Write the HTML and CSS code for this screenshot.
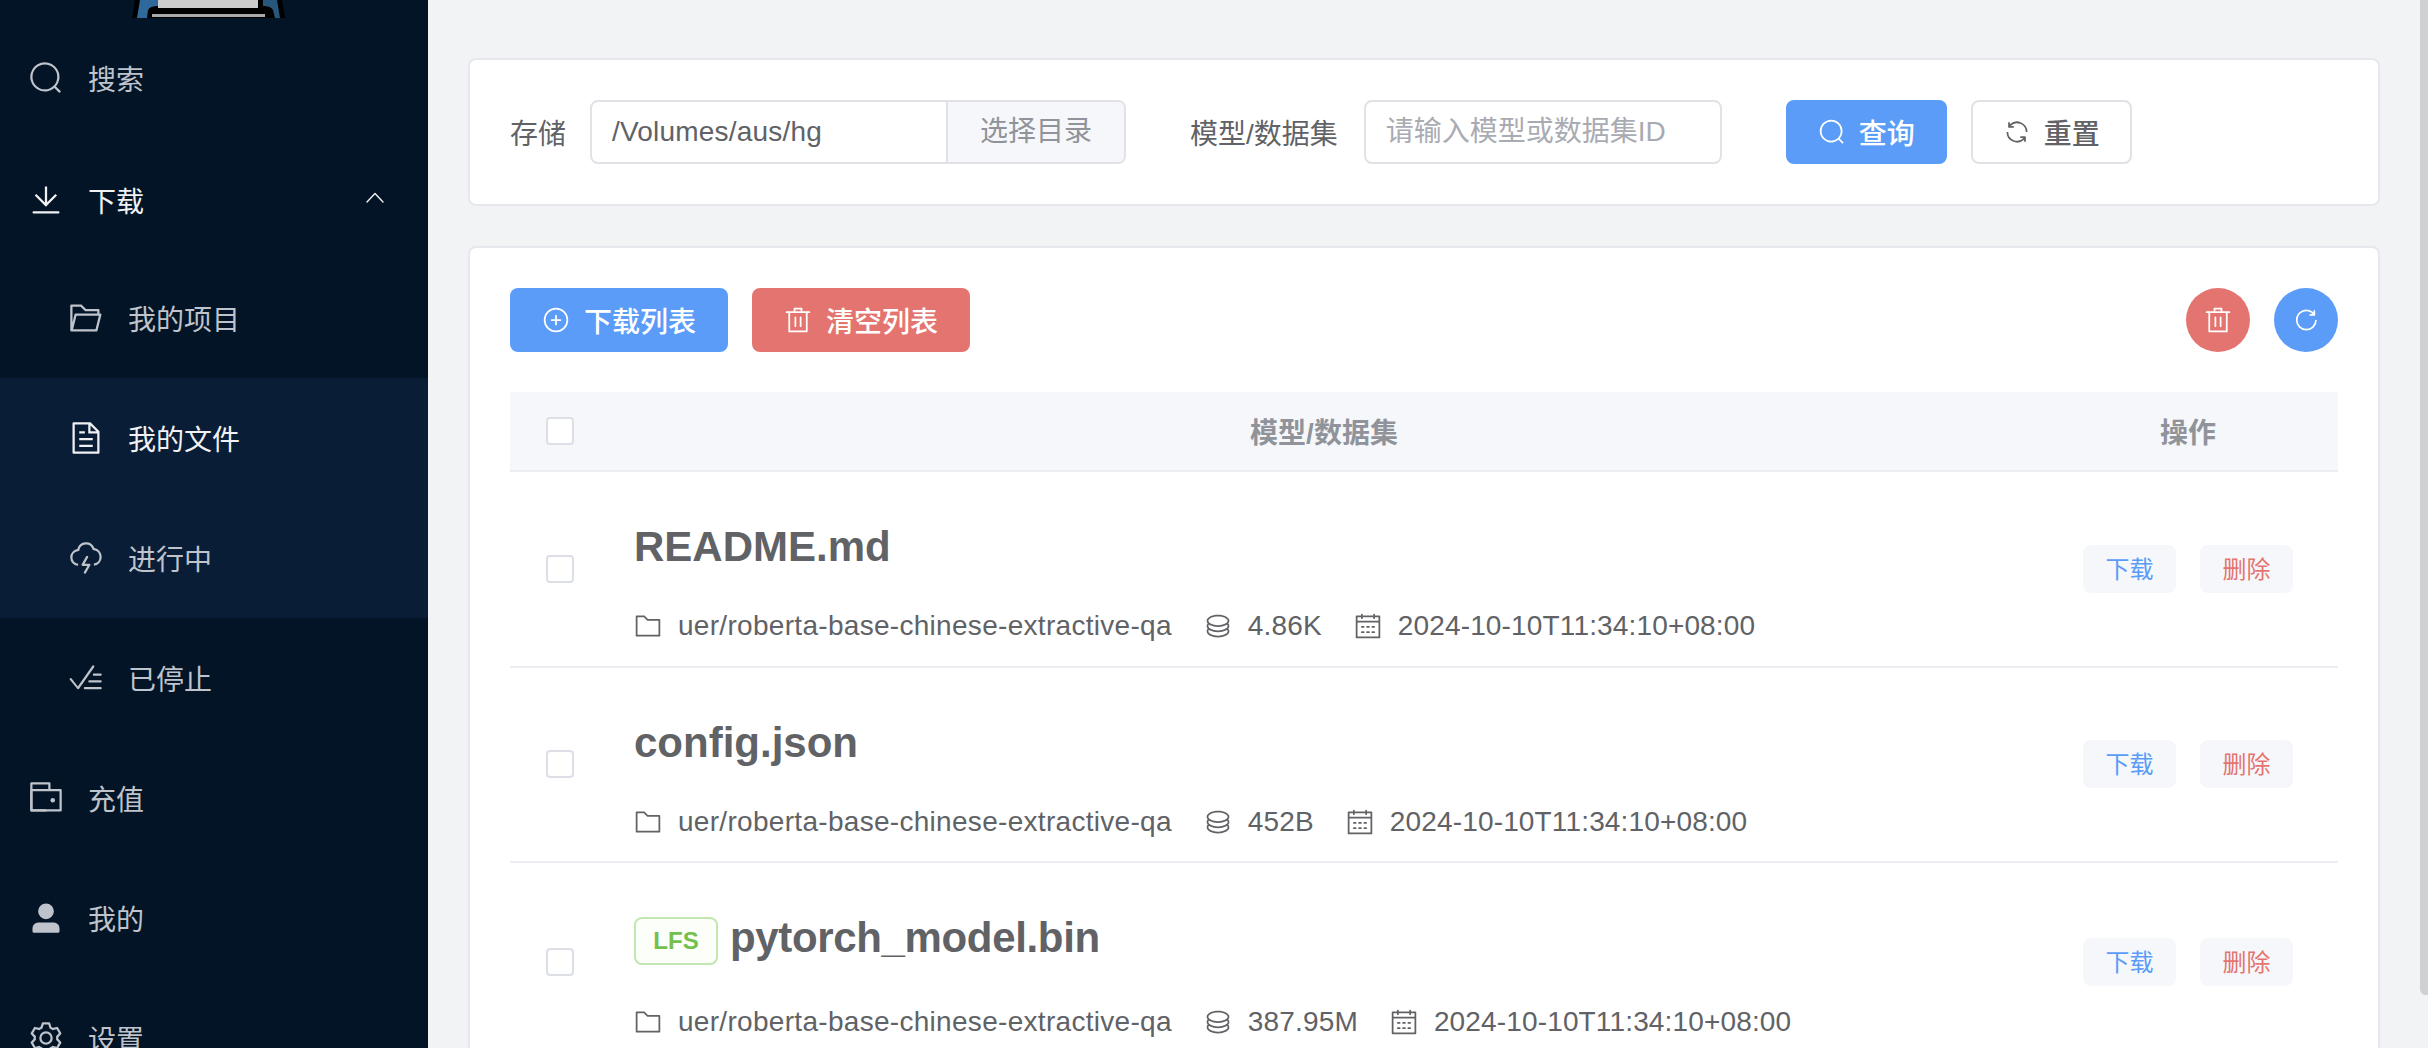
FILE: index.html
```html
<!DOCTYPE html>
<html lang="zh-CN">
<head>
    <meta charset="UTF-8">
    <meta name="viewport" content="width=device-width, initial-scale=1.0">
    <title>我的文件</title>
    <link rel="stylesheet" href="styles.css">
</head>
<body>
    <svg class="icon-defs" xmlns="http://www.w3.org/2000/svg">
        <symbol id="i-search" viewBox="0 0 1024 1024"><path d="m795.904 750.72 124.992 124.928a32 32 0 0 1-45.248 45.248L750.656 795.904a416 416 0 1 1 45.248-45.248zM480 832a352 352 0 1 0 0-704 352 352 0 0 0 0 704z"/></symbol>
        <symbol id="i-download" viewBox="0 0 1024 1024"><path d="M160 832h704a32 32 0 1 1 0 64H160a32 32 0 1 1 0-64zm384-253.696 236.288-236.352 45.248 45.248L508.8 704 192 387.2l45.248-45.248L480 584.704V128h64v450.304z"/></symbol>
        <symbol id="i-arrow-up" viewBox="0 0 1024 1024"><path d="m488.832 344.32-339.84 356.672a32 32 0 0 0 0 44.16l.384.384a29.44 29.44 0 0 0 42.688 0l320-335.872 319.872 335.872a29.44 29.44 0 0 0 42.688 0l.384-.384a32 32 0 0 0 0-44.16L535.168 344.32a32 32 0 0 0-46.336 0z"/></symbol>
        <symbol id="i-folder-opened" viewBox="0 0 1024 1024"><path d="M878.08 448H241.92l-96 384h636.16l96-384zM832 384v-64H485.76L357.504 192H128v448l57.92-231.744A32 32 0 0 1 216.96 384H832zm-24.96 512H96a32 32 0 0 1-32-32V160a32 32 0 0 1 32-32h287.872l128.384 128H864a32 32 0 0 1 32 32v96h23.04a32 32 0 0 1 31.04 39.744l-112 448A32 32 0 0 1 807.04 896z"/></symbol>
        <symbol id="i-document" viewBox="0 0 1024 1024"><path d="M832 384H576V128H192v768h640V384zm-26.496-64L640 154.496V320h165.504zM160 64h480l256 256v608a32 32 0 0 1-32 32H160a32 32 0 0 1-32-32V96a32 32 0 0 1 32-32zm160 448h384v64H320v-64zm0-192h160v64H320v-64zm0 384h384v64H320v-64z"/></symbol>
        <symbol id="i-lightning" viewBox="0 0 1024 1024"><path d="M288 671.36v64.128A239.808 239.808 0 0 1 63.744 496.192a240.32 240.32 0 0 1 199.488-236.8 256.128 256.128 0 0 1 487.872-30.976A256.064 256.064 0 0 1 736 734.016v-64.768a192 192 0 0 0 3.328-377.92l-35.2-6.592-12.8-33.408a192.064 192.064 0 0 0-365.952 23.232l-9.92 40.896-41.472 7.04a176.32 176.32 0 0 0-146.24 173.568c0 91.968 70.464 167.36 160.256 175.232z"/><path d="M416 736a32 32 0 0 1-27.776-47.872l128-224a32 32 0 1 1 55.552 31.744L471.168 672H608a32 32 0 0 1 27.776 47.872l-128 224a32 32 0 1 1-55.68-31.744L552.96 736H416z"/></symbol>
        <symbol id="i-finished" viewBox="0 0 1024 1024"><path d="M280.768 753.728 691.456 167.04a32 32 0 1 1 52.416 36.672L314.24 817.472a32 32 0 0 1-45.44 7.296 32 32 0 0 1-6.08-5.76L53.376 563.712a32 32 0 1 1 49.728-40.32l177.664 230.336zM736 448a32 32 0 1 1 0-64h192a32 32 0 1 1 0 64H736zM608 640a32 32 0 0 1 0-64h319.936a32 32 0 1 1 0 64H608zM480 832a32 32 0 1 1 0-64h447.936a32 32 0 1 1 0 64H480z"/></symbol>
        <symbol id="i-wallet" viewBox="0 0 1024 1024"><path d="M640 288h-64V128H128v704h384v32a32 32 0 0 0 32 32H96a32 32 0 0 1-32-32V96a32 32 0 0 1 32-32h512a32 32 0 0 1 32 32v192z"/><path d="M128 320v512h768V320H128zm-32-64h832a32 32 0 0 1 32 32v576a32 32 0 0 1-32 32H96a32 32 0 0 1-32-32V288a32 32 0 0 1 32-32z"/><path d="M704 640a64 64 0 1 1 0-128 64 64 0 0 1 0 128z"/></symbol>
        <symbol id="i-user" viewBox="0 0 1024 1024"><path d="M288 320a224 224 0 1 0 448 0 224 224 0 1 0-448 0zm544 608H160a32 32 0 0 1-32-32v-96a160 160 0 0 1 160-160h448a160 160 0 0 1 160 160v96a32 32 0 0 1-32 32z"/></symbol>
        <symbol id="i-setting" viewBox="0 0 1024 1024"><path d="M600.704 64a32 32 0 0 1 30.464 22.208l35.2 109.376c14.784 7.232 28.928 15.36 42.432 24.512l112.384-24.192a32 32 0 0 1 34.432 15.36L944.32 364.8a32 32 0 0 1-4.032 37.504l-77.12 85.12a357.12 357.12 0 0 1 0 49.024l77.12 85.248a32 32 0 0 1 4.032 37.504l-88.704 153.6a32 32 0 0 1-34.432 15.296L708.8 803.904c-13.44 9.088-27.648 17.28-42.368 24.512l-35.264 109.376A32 32 0 0 1 600.704 960H423.296a32 32 0 0 1-30.464-22.208L357.696 828.48a351.616 351.616 0 0 1-42.56-24.64l-112.32 24.256a32 32 0 0 1-34.432-15.36L79.68 659.2a32 32 0 0 1 4.032-37.504l77.12-85.248a357.12 357.12 0 0 1 0-48.896l-77.12-85.248A32 32 0 0 1 79.68 364.8l88.704-153.6a32 32 0 0 1 34.432-15.296l112.32 24.256c13.568-9.152 27.776-17.408 42.56-24.64l35.2-109.312A32 32 0 0 1 423.232 64H600.64zm-23.424 64H446.72l-36.352 113.088-24.512 11.968a294.113 294.113 0 0 0-34.816 20.096l-22.656 15.36-116.224-25.088-65.28 113.152 79.68 88.192-1.92 27.136a293.12 293.12 0 0 0 0 40.192l1.92 27.136-79.808 88.192 65.344 113.152 116.224-25.024 22.656 15.296a294.113 294.113 0 0 0 34.816 20.096l24.512 11.968L446.72 896h130.688l36.48-113.152 24.448-11.904a288.282 288.282 0 0 0 34.752-20.096l22.592-15.296 116.288 25.024 65.28-113.152-79.744-88.192 1.92-27.136a293.12 293.12 0 0 0 0-40.256l-1.92-27.136 79.808-88.128-65.344-113.152-116.288 24.96-22.592-15.232a287.616 287.616 0 0 0-34.752-20.096l-24.448-11.904L577.344 128zM512 320a192 192 0 1 1 0 384 192 192 0 0 1 0-384zm0 64a128 128 0 1 0 0 256 128 128 0 0 0 0-256z"/></symbol>
        <symbol id="i-circle-plus" viewBox="0 0 1024 1024"><path d="M352 480h320a32 32 0 1 1 0 64H352a32 32 0 0 1 0-64z"/><path d="M480 672V352a32 32 0 1 1 64 0v320a32 32 0 0 1-64 0z"/><path d="M512 896a384 384 0 1 0 0-768 384 384 0 0 0 0 768zm0 64a448 448 0 1 1 0-896 448 448 0 0 1 0 896z"/></symbol>
        <symbol id="i-delete" viewBox="0 0 1024 1024"><path d="M160 256H96a32 32 0 0 1 0-64h256V95.936a32 32 0 0 1 32-32h256a32 32 0 0 1 32 32V192h256a32 32 0 1 1 0 64h-64v672a32 32 0 0 1-32 32H192a32 32 0 0 1-32-32V256zm448-64v-64H416v64h192zM224 896h576V256H224v640zm192-128a32 32 0 0 1-32-32V416a32 32 0 0 1 64 0v320a32 32 0 0 1-32 32zm192 0a32 32 0 0 1-32-32V416a32 32 0 0 1 64 0v320a32 32 0 0 1-32 32z"/></symbol>
        <symbol id="i-refresh" viewBox="0 0 1024 1024"><path d="M771.776 794.88A384 384 0 0 1 128 512h64a320 320 0 0 0 555.712 216.448H654.72a32 32 0 1 1 0-64h149.056a32 32 0 0 1 32 32v148.928a32 32 0 1 1-64 0v-50.56zM276.288 295.616h92.992a32 32 0 0 1 0 64H220.16a32 32 0 0 1-32-32V178.56a32 32 0 0 1 64 0v50.56A384 384 0 0 1 896.128 512h-64a320 320 0 0 0-555.776-216.384z"/></symbol>
        <symbol id="i-refresh-right" viewBox="0 0 1024 1024"><path d="M784.512 230.272v-50.56a32 32 0 1 1 64 0v149.056a32 32 0 0 1-32 32H667.52a32 32 0 1 1 0-64h92.992A320 320 0 1 0 524.8 833.152a320 320 0 0 0 320-320h64a384 384 0 0 1-384 384 384 384 0 0 1-384-384 384 384 0 0 1 643.712-282.88z"/></symbol>
        <symbol id="i-folder" viewBox="0 0 1024 1024"><path d="M128 192v640h768V320H485.76L357.504 192H128zm-32-64h287.872l128.384 128H928a32 32 0 0 1 32 32v576a32 32 0 0 1-32 32H96a32 32 0 0 1-32-32V160a32 32 0 0 1 32-32z"/></symbol>
        <symbol id="i-coin" viewBox="0 0 1024 1024"><path d="m161.92 580.736 29.888 58.88C171.328 659.776 160 681.728 160 704c0 82.304 155.328 160 352 160s352-77.696 352-160c0-22.272-11.392-44.16-31.808-64.32l30.464-58.432C903.936 615.808 928 657.664 928 704c0 129.728-188.544 224-416 224S96 833.728 96 704c0-46.592 24.32-88.576 65.92-123.264z"/><path d="m161.92 388.736 29.888 58.88C171.328 467.84 160 489.792 160 512c0 82.304 155.328 160 352 160s352-77.696 352-160c0-22.272-11.392-44.16-31.808-64.32l30.464-58.432C903.936 423.808 928 465.664 928 512c0 129.728-188.544 224-416 224S96 641.728 96 512c0-46.592 24.32-88.576 65.92-123.264z"/><path d="M512 544c-227.456 0-416-94.272-416-224S284.544 96 512 96s416 94.272 416 224-188.544 224-416 224zm0-64c196.672 0 352-77.696 352-160S708.672 160 512 160s-352 77.696-352 160 155.328 160 352 160z"/></symbol>
        <symbol id="i-calendar" viewBox="0 0 1024 1024"><path d="M128 384v512h768V192H768v32a32 32 0 1 1-64 0v-32H320v32a32 32 0 0 1-64 0v-32H128v128h768v64H128zm192-256h384V96a32 32 0 1 1 64 0v32h160a32 32 0 0 1 32 32v768a32 32 0 0 1-32 32H96a32 32 0 0 1-32-32V160a32 32 0 0 1 32-32h160V96a32 32 0 0 1 64 0v32zm-32 384h64a32 32 0 0 1 0 64h-64a32 32 0 0 1 0-64zm0 192h64a32 32 0 1 1 0 64h-64a32 32 0 1 1 0-64zm192-192h64a32 32 0 0 1 0 64h-64a32 32 0 0 1 0-64zm0 192h64a32 32 0 1 1 0 64h-64a32 32 0 1 1 0-64zm192-192h64a32 32 0 1 1 0 64h-64a32 32 0 1 1 0-64zm0 192h64a32 32 0 1 1 0 64h-64a32 32 0 1 1 0-64z"/></symbol>
    </svg>

    <div class="layout">
        <aside class="sidebar">
            <div class="logo">
                <svg viewBox="0 0 153 18" width="153" height="18">
                    <path fill="#000" d="M0 18 3 0H150L153 18Z"/>
                    <path fill="#2f699b" d="M5 18 8 0H26V6Q18 6 16 10L15 18Z"/>
                    <path fill="#27587b" d="M148 18 145 0H131V6Q139 6 141 10L143 18Z"/>
                    <rect fill="#cdcdcd" x="26" y="0" width="100" height="8"/>
                    <rect fill="#a9a9a9" x="20" y="14" width="113" height="3"/>
                </svg>
            </div>
            <nav class="menu">
                <a class="menu-item"><svg class="icon"><use href="#i-search"/></svg>搜索</a>
                <a class="menu-item open"><svg class="icon"><use href="#i-download"/></svg>下载<svg class="chevron"><use href="#i-arrow-up"/></svg></a>
                <a class="menu-item sub"><svg class="icon"><use href="#i-folder-opened"/></svg>我的项目</a>
                <a class="menu-item sub current active"><svg class="icon"><use href="#i-document"/></svg>我的文件</a>
                <a class="menu-item sub current"><svg class="icon"><use href="#i-lightning"/></svg>进行中</a>
                <a class="menu-item sub"><svg class="icon"><use href="#i-finished"/></svg>已停止</a>
                <a class="menu-item"><svg class="icon"><use href="#i-wallet"/></svg>充值</a>
                <a class="menu-item"><svg class="icon"><use href="#i-user"/></svg>我的</a>
                <a class="menu-item"><svg class="icon"><use href="#i-setting"/></svg>设置</a>
            </nav>
        </aside>

        <main class="main">
            <section class="card search-card">
                <label class="form-label">存储</label>
                <div class="input-group">
                    <span class="input-value">/Volumes/aus/hg</span>
                    <span class="input-append">选择目录</span>
                </div>
                <label class="form-label second">模型/数据集</label>
                <div class="input-box">请输入模型或数据集ID</div>
                <button class="btn primary query"><svg class="icon"><use href="#i-search"/></svg>查询</button>
                <button class="btn plain"><svg class="icon"><use href="#i-refresh"/></svg>重置</button>
            </section>

            <section class="card list-card">
                <div class="toolbar">
                    <button class="btn primary wide"><svg class="icon"><use href="#i-circle-plus"/></svg>下载列表</button>
                    <button class="btn danger wide"><svg class="icon"><use href="#i-delete"/></svg>清空列表</button>
                    <div class="toolbar-right">
                        <button class="btn-circle danger"><svg class="icon"><use href="#i-delete"/></svg></button>
                        <button class="btn-circle primary"><svg class="icon"><use href="#i-refresh-right"/></svg></button>
                    </div>
                </div>

                <div class="table">
                    <div class="row head">
                        <div class="cell-check"><span class="checkbox"></span></div>
                        <div class="cell-name">模型/数据集</div>
                        <div class="cell-ops">操作</div>
                    </div>

                    <div class="row">
                        <div class="cell-check"><span class="checkbox"></span></div>
                        <div class="cell-name">
                            <div class="file-title">README.md</div>
                            <div class="meta">
                                <span class="meta-item"><svg class="icon"><use href="#i-folder"/></svg>uer/roberta-base-chinese-extractive-qa</span>
                                <span class="meta-item"><svg class="icon"><use href="#i-coin"/></svg>4.86K</span>
                                <span class="meta-item"><svg class="icon"><use href="#i-calendar"/></svg>2024-10-10T11:34:10+08:00</span>
                            </div>
                        </div>
                        <div class="cell-ops">
                            <button class="btn-small blue">下载</button>
                            <button class="btn-small red">删除</button>
                        </div>
                    </div>

                    <div class="row">
                        <div class="cell-check"><span class="checkbox"></span></div>
                        <div class="cell-name">
                            <div class="file-title">config.json</div>
                            <div class="meta">
                                <span class="meta-item"><svg class="icon"><use href="#i-folder"/></svg>uer/roberta-base-chinese-extractive-qa</span>
                                <span class="meta-item"><svg class="icon"><use href="#i-coin"/></svg>452B</span>
                                <span class="meta-item"><svg class="icon"><use href="#i-calendar"/></svg>2024-10-10T11:34:10+08:00</span>
                            </div>
                        </div>
                        <div class="cell-ops">
                            <button class="btn-small blue">下载</button>
                            <button class="btn-small red">删除</button>
                        </div>
                    </div>

                    <div class="row">
                        <div class="cell-check"><span class="checkbox"></span></div>
                        <div class="cell-name">
                            <div class="file-title lfs"><span class="tag">LFS</span>pytorch_model.bin</div>
                            <div class="meta">
                                <span class="meta-item"><svg class="icon"><use href="#i-folder"/></svg>uer/roberta-base-chinese-extractive-qa</span>
                                <span class="meta-item"><svg class="icon"><use href="#i-coin"/></svg>387.95M</span>
                                <span class="meta-item"><svg class="icon"><use href="#i-calendar"/></svg>2024-10-10T11:34:10+08:00</span>
                            </div>
                        </div>
                        <div class="cell-ops">
                            <button class="btn-small blue">下载</button>
                            <button class="btn-small red">删除</button>
                        </div>
                    </div>
                </div>
            </section>
        </main>
        <div class="scrollbar"></div>
    </div>
</body>
</html>
```

FILE: styles.css
```css
:root {
    --blue: #5a9cf8;
    --red: #e4746f;
    --text: #606266;
    --muted: #909399;
    --border: #e0e2e8;
    --line: #ebedf3;
    --head-bg: #f5f7fa;
}
* {
    box-sizing: border-box;
}
body {
    margin: 0;
    height: 1048px;
    overflow: hidden;
    background: #f2f3f5;
    color: var(--text);
    font-family: "Liberation Sans", "Noto Sans CJK SC", sans-serif;
    font-size: 28px;
}
button {
    font-family: inherit;
}
.icon-defs {
    display: none;
}
.icon {
    width: 28px;
    height: 28px;
    fill: currentColor;
    flex: none;
}
.layout {
    position: relative;
    display: flex;
    height: 100%;
}

/* sidebar */
.sidebar {
    width: 428px;
    flex: none;
    background: #021425;
    overflow: hidden;
}
.logo {
    height: 18px;
    padding-left: 132px;
}
.logo svg {
    display: block;
}
.menu-item {
    display: flex;
    align-items: center;
    height: 120px;
    padding-left: 28px;
    color: #bfc3cb;
}
.menu-item .icon {
    width: 36px;
    height: 36px;
    margin-right: 24px;
}
.menu-item.sub {
    padding-left: 68px;
}
.menu-item.current {
    background: #0a1d36;
}
.menu-item.open {
    padding-top: 4px;
}
.menu-item.open,
.menu-item.active {
    color: #f0f1f3;
}
.chevron {
    width: 24px;
    height: 24px;
    fill: currentColor;
    margin-left: auto;
    margin-right: 41px;
    margin-top: -6px;
}

/* main */
.main {
    flex: 1;
    padding: 58px 48px 0 40px;
    min-width: 0;
}
.card {
    background: #fff;
    border: 2px solid #e6e8ed;
    border-radius: 8px;
    padding: 40px;
}
.search-card {
    display: flex;
    align-items: center;
    margin-bottom: 40px;
}
.form-label {
    margin-right: 24px;
    white-space: nowrap;
}
.form-label.second {
    margin-left: 64px;
    margin-right: 26px;
}
.input-group {
    display: flex;
    width: 536px;
    height: 64px;
    border: 2px solid var(--border);
    border-radius: 8px;
    overflow: hidden;
}
.input-value {
    flex: 1;
    padding-left: 20px;
    line-height: 60px;
    letter-spacing: 0.2px;
}
.input-append {
    width: 178px;
    border-left: 2px solid var(--border);
    background: var(--head-bg);
    color: var(--muted);
    text-align: center;
    line-height: 60px;
}
.input-box {
    width: 358px;
    height: 64px;
    border: 2px solid var(--border);
    border-radius: 8px;
    padding-left: 20px;
    color: #a8abb2;
    line-height: 60px;
    margin-right: 64px;
}

/* buttons */
.btn {
    display: inline-flex;
    align-items: center;
    height: 64px;
    padding: 0 30px;
    border: 2px solid transparent;
    border-radius: 8px;
    font-size: 28px;
    font-weight: 500;
}
.btn .icon {
    margin-right: 13px;
}
.btn.wide .icon {
    margin-right: 14px;
}
.btn.primary,
.btn-circle.primary {
    background: var(--blue);
    color: #fff;
}
.btn.danger,
.btn-circle.danger {
    background: var(--red);
    color: #fff;
}
.btn.plain {
    background: #fff;
    border-color: var(--border);
    color: var(--text);
}
.btn.query {
    margin-right: 24px;
}
.toolbar {
    display: flex;
    gap: 24px;
    margin-bottom: 40px;
}
.toolbar-right {
    display: flex;
    gap: 24px;
    margin-left: auto;
}
.btn-circle {
    display: flex;
    align-items: center;
    justify-content: center;
    width: 64px;
    height: 64px;
    border: 0;
    border-radius: 50%;
    padding: 0;
}
.btn-small {
    width: 93px;
    height: 48px;
    border: 0;
    border-radius: 8px;
    background: var(--head-bg);
    font-size: 24px;
    padding: 0 0 3px;
}
.btn-small.blue {
    color: var(--blue);
}
.btn-small.red {
    color: var(--red);
}

/* table */
.row {
    display: flex;
    align-items: center;
    border-bottom: 2px solid var(--line);
}
.row.head {
    height: 80px;
    background: var(--head-bg);
    color: var(--muted);
    font-weight: 700;
    text-align: center;
}
.cell-check {
    width: 100px;
    flex: none;
    display: flex;
    justify-content: center;
}
.checkbox {
    display: block;
    width: 28px;
    height: 28px;
    background: #fff;
    border: 2px solid #dcdfe6;
    border-radius: 4px;
}
.cell-name {
    flex: 1;
    min-width: 0;
    padding: 47px 24px 17.5px;
}
.head .cell-name {
    padding: 0;
}
.cell-ops {
    width: 300px;
    flex: none;
    display: flex;
    justify-content: center;
    gap: 24px;
}
.file-title {
    display: flex;
    align-items: center;
    height: 56px;
    font-size: 42px;
    font-weight: 700;
    margin-bottom: 29px;
}
.file-title.lfs {
    margin-bottom: 34px;
    letter-spacing: -0.35px;
}
.tag {
    display: flex;
    align-items: center;
    justify-content: center;
    width: 84px;
    height: 48px;
    margin-right: 12px;
    margin-top: 6px;
    border: 2px solid #c2e7b0;
    border-radius: 8px;
    background: #fbfef9;
    color: #74c04c;
    font-size: 24px;
    font-weight: 700;
    letter-spacing: 0;
}
.meta {
    display: flex;
    gap: 32px;
    height: 44px;
    align-items: center;
}
.meta-item {
    display: flex;
    align-items: center;
    white-space: nowrap;
    letter-spacing: 0.15px;
}
.meta-item:first-child {
    letter-spacing: 0.3px;
}
.meta-item .icon {
    margin-right: 16px;
}

.scrollbar {
    position: absolute;
    top: 0;
    right: 0;
    width: 8px;
    height: 995px;
    background: #cfd0d4;
    border-radius: 0 0 0 6px;
}
```
